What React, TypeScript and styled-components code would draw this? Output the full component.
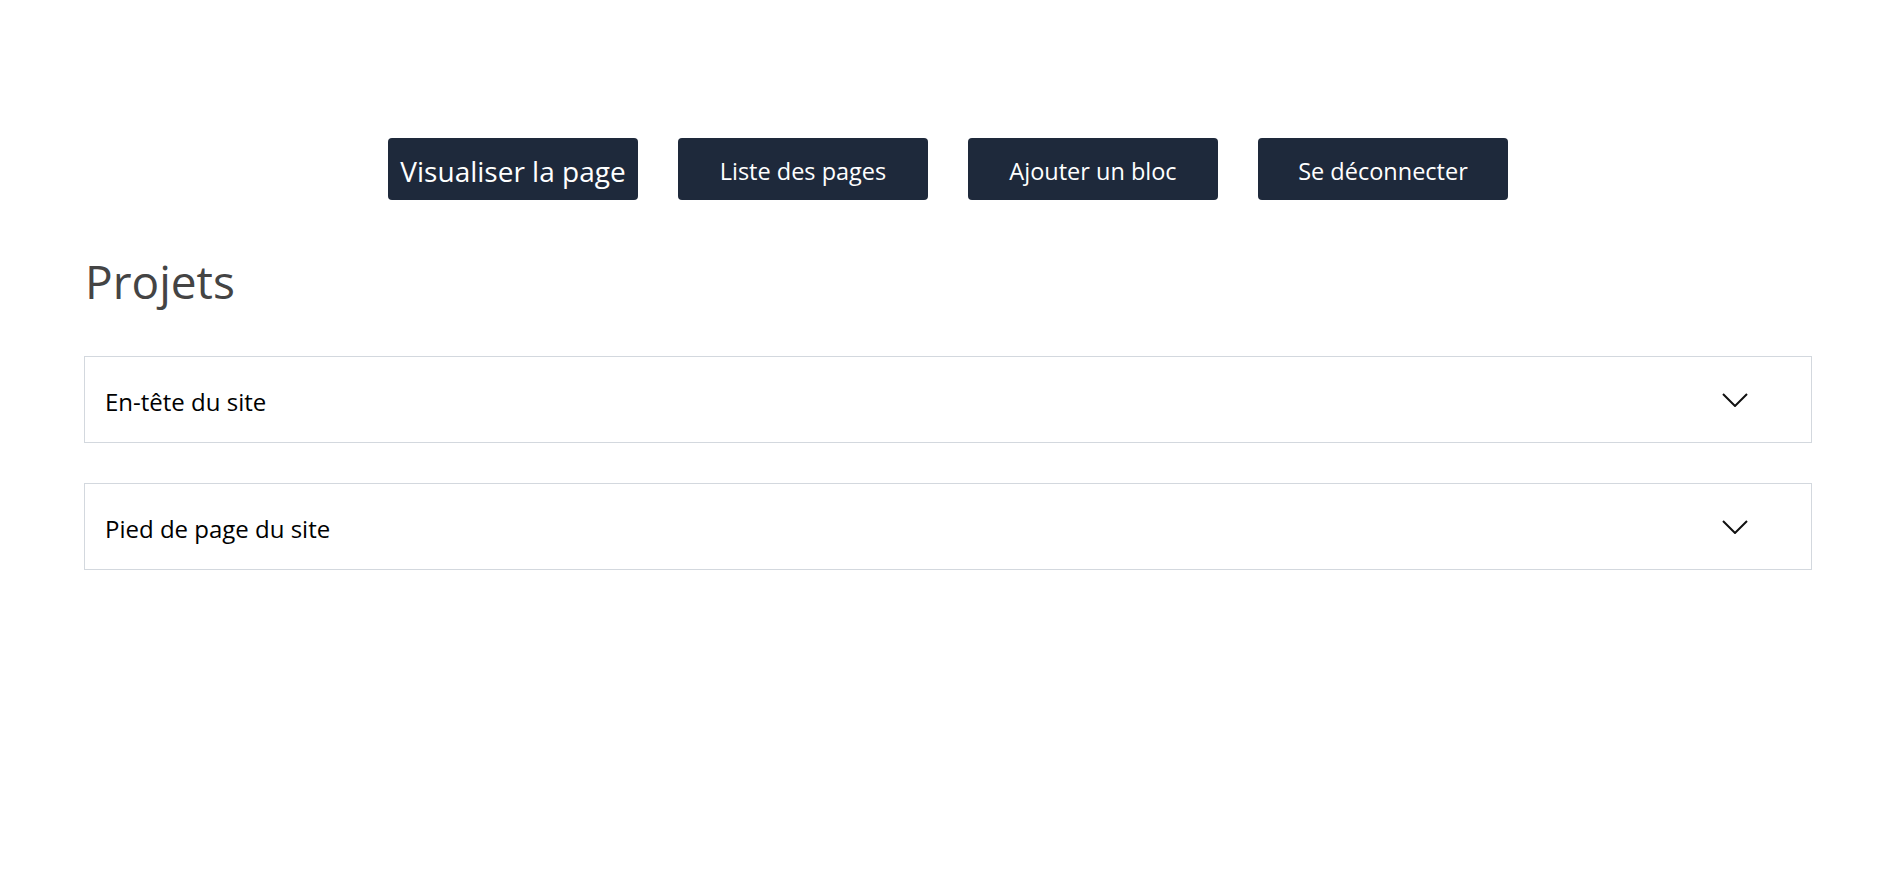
import React from "react";
import styled, { createGlobalStyle } from "styled-components";

const Global = createGlobalStyle`
  html, body { margin: 0; padding: 0; background: #fff; }
  body { font-family: "Open Sans", "Noto Sans", sans-serif; }
`;

const Page = styled.div`
  padding: 138px 88px 0 84px;
`;

const Nav = styled.nav`
  display: flex;
  justify-content: center;
  gap: 40px;
`;

const NavButton = styled.button<{ $big?: boolean }>`
  width: 250px;
  height: 62px;
  background: #1e293b;
  color: #fff;
  border: none;
  border-radius: 4px;
  font-family: "Open Sans", sans-serif;
  font-size: ${(p) => (p.$big ? "28px" : "23.5px")};
  display: flex;
  align-items: center;
  justify-content: center;
  padding: 3px 0 0;
  cursor: pointer;
`;

const Title = styled.h1`
  margin: 47px 0 41px 1px;
  font-weight: 400;
  font-size: 46px;
  line-height: 68px;
  color: #444;
`;

const List = styled.div`
  display: flex;
  flex-direction: column;
  gap: 40px;
`;

const Item = styled.div`
  height: 87px;
  border: 1px solid #d3d8de;
  box-sizing: border-box;
  display: flex;
  align-items: center;
  justify-content: space-between;
  padding: 3px 63px 0 20px;
  font-size: 24px;
  color: #000;
`;

const Chevron = () => (
  <svg width="26" height="14" viewBox="0 0 26 14" fill="none" style={{ marginTop: -3 }}>
    <path d="M1 1 L13 13 L25 1" stroke="#111" strokeWidth="2" />
  </svg>
);

export default function App() {
  return (
    <>
      <Global />
      <Page>
        <Nav>
          <NavButton $big>Visualiser la page</NavButton>
          <NavButton>Liste des pages</NavButton>
          <NavButton>Ajouter un bloc</NavButton>
          <NavButton>Se déconnecter</NavButton>
        </Nav>
        <Title>Projets</Title>
        <List>
          <Item>
            <span>En-tête du site</span>
            <Chevron />
          </Item>
          <Item>
            <span>Pied de page du site</span>
            <Chevron />
          </Item>
        </List>
      </Page>
    </>
  );
}
